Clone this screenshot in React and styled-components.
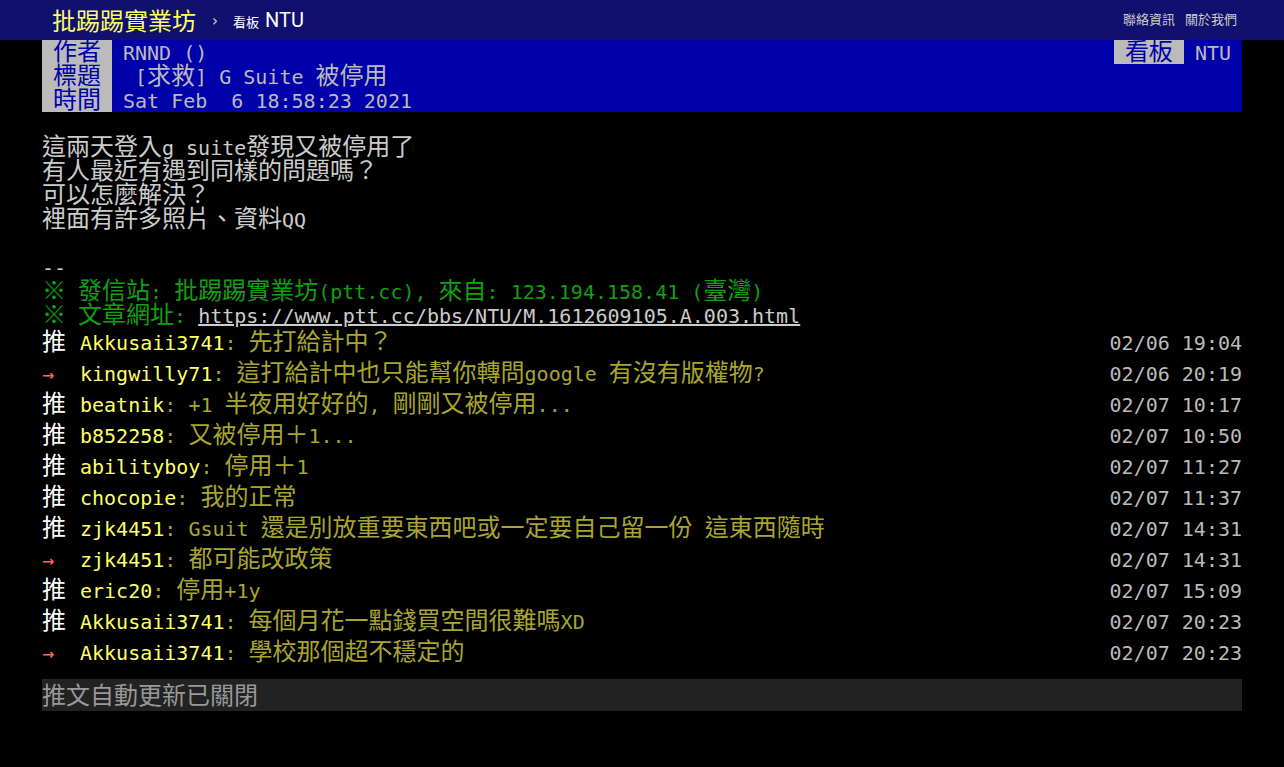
import React from 'react';
import styled, { createGlobalStyle } from 'styled-components';

const GlobalStyle = createGlobalStyle`
  html, body {
    margin: 0;
    background: #000;
  }
  body {
    font-family: "DejaVu Sans Mono", "Noto Sans CJK TC", monospace;
    font-size: 20px;
    color: #ccc;
  }
`;

const Topbar = styled.div`
  height: 40px;
  background: #10106e;
`;

const TopbarInner = styled.div`
  width: 1200px;
  height: 100%;
  margin: 0 auto;
  padding: 0 5px 0 10px;
  box-sizing: border-box;
  display: flex;
  align-items: center;
`;

const SiteTitle = styled.a`
  font-family: "Noto Sans CJK TC", sans-serif;
  font-size: 24px;
  line-height: 40px;
  color: #ff6;
  text-decoration: none;
`;

const Sep = styled.span`
  font-family: "DejaVu Sans", sans-serif;
  font-size: 15px;
  color: #ddd;
  margin: 2px 15px 0 16px;
`;

const BoardLabel = styled.span`
  font-family: "Noto Sans CJK TC", sans-serif;
  font-size: 13px;
  color: #fff;
  margin: 3px 6px 0 0;
`;

const BoardName = styled.a`
  font-family: Roboto, "Noto Sans", sans-serif;
  font-size: 20px;
  color: #fff;
  text-decoration: none;
`;

const TopLinks = styled.nav`
  margin: 0 0 4px auto;
  display: flex;
  gap: 10px;
`;

const TopLink = styled.a`
  font-family: "Noto Sans CJK TC", sans-serif;
  font-size: 13px;
  color: #ccc;
  text-decoration: none;
`;

const Main = styled.div`
  width: 1200px;
  margin: 0 auto;
`;

// full-width glyphs: double the cell of the mono font
const Wide = styled.span`
  font-family: "Noto Sans CJK TC", sans-serif;
  font-size: 1.2em;
  line-height: 0;
`;

const Header = styled.div`
  background: #00a;
  color: #bbb;
`;

const MetaRow = styled.div`
  display: flex;
  height: 24px;
  line-height: 26px;
  white-space: pre;
`;

const MetaTag = styled.span`
  background: #bbb;
  color: #00a;
  padding: 0 11px;
  height: 24px;
`;

const MetaValue = styled.span`
  padding: 0 11px;
  flex: ${(p) => (p.$grow ? 1 : 'none')};
`;

const Body = styled.div`
  margin-top: 24px;
`;

const Line = styled.div`
  height: 24px;
  line-height: 24px;
  white-space: pre;
  color: ${(p) => p.$color || '#ccc'};
`;

const Link = styled.a`
  color: #ccc;
  text-decoration: underline;
`;

const PushRow = styled.div`
  display: flex;
  align-items: baseline;
  height: 31px;
  line-height: 31px;
  white-space: pre;
`;

const PushTag = styled.span`
  width: 38px;
  flex: none;
  color: ${(p) => (p.$arrow ? '#f66' : '#fff')};
`;

const PushUser = styled.span`
  color: #ff6;
`;

const PushContent = styled.span`
  color: #a9a530;
  flex: 1;
`;

const PushDate = styled.span`
  color: #bbb;
`;

const Polling = styled.div`
  margin-top: 10px;
  height: 32px;
  line-height: 36px;
  background: #222;
  color: #999;
`;

const WIDE_RE = /([\u203b\u2e80-\u9fff\uf900-\ufaff\ufe30-\ufe4f\uff00-\uff60\uffe0-\uffe6]+)/;

const Txt = ({ text }) =>
  text.split(WIDE_RE).map((s, i) => (i % 2 ? <Wide key={i}>{s}</Wide> : s));

const pushes = [
  ['推', 'Akkusaii3741', ': 先打給計中？', '02/06 19:04'],
  ['→', 'kingwilly71', ': 這打給計中也只能幫你轉問google 有沒有版權物?', '02/06 20:19'],
  ['推', 'beatnik', ': +1 半夜用好好的, 剛剛又被停用...', '02/07 10:17'],
  ['推', 'b852258', ': 又被停用＋1...', '02/07 10:50'],
  ['推', 'abilityboy', ': 停用＋1', '02/07 11:27'],
  ['推', 'chocopie', ': 我的正常', '02/07 11:37'],
  ['推', 'zjk4451', ': Gsuit 還是別放重要東西吧或一定要自己留一份 這東西隨時', '02/07 14:31'],
  ['→', 'zjk4451', ': 都可能改政策', '02/07 14:31'],
  ['推', 'eric20', ': 停用+1y', '02/07 15:09'],
  ['推', 'Akkusaii3741', ': 每個月花一點錢買空間很難嗎XD', '02/07 20:23'],
  ['→', 'Akkusaii3741', ': 學校那個超不穩定的', '02/07 20:23'],
];

const bodyLines = [
  '這兩天登入g suite發現又被停用了',
  '有人最近有遇到同樣的問題嗎？',
  '可以怎麼解決？',
  '裡面有許多照片、資料QQ',
  '',
  '--',
];

export default function App() {
  return (
    <>
      <GlobalStyle />
      <Topbar>
        <TopbarInner>
          <SiteTitle href="#">批踢踢實業坊</SiteTitle>
          <Sep>›</Sep>
          <BoardLabel>看板</BoardLabel>
          <BoardName href="#">NTU</BoardName>
          <TopLinks>
            <TopLink href="#">聯絡資訊</TopLink>
            <TopLink href="#">關於我們</TopLink>
          </TopLinks>
        </TopbarInner>
      </Topbar>
      <Main>
        <Header>
          <MetaRow>
            <MetaTag><Txt text="作者" /></MetaTag>
            <MetaValue $grow>RNND ()</MetaValue>
            <MetaTag><Txt text="看板" /></MetaTag>
            <MetaValue>NTU</MetaValue>
          </MetaRow>
          <MetaRow>
            <MetaTag><Txt text="標題" /></MetaTag>
            <MetaValue $grow><Txt text=" [求救] G Suite 被停用" /></MetaValue>
          </MetaRow>
          <MetaRow>
            <MetaTag><Txt text="時間" /></MetaTag>
            <MetaValue $grow>Sat Feb  6 18:58:23 2021</MetaValue>
          </MetaRow>
        </Header>
        <Body>
          {bodyLines.map((l, i) => (
            <Line key={i}><Txt text={l} /></Line>
          ))}
          <Line $color="#11a011">
            <Txt text="※ 發信站: 批踢踢實業坊(ptt.cc), 來自: 123.194.158.41 (臺灣)" />
          </Line>
          <Line $color="#11a011">
            <Txt text="※ 文章網址: " />
            <Link href="#">https://www.ptt.cc/bbs/NTU/M.1612609105.A.003.html</Link>
          </Line>
          {pushes.map(([tag, user, content, date], i) => (
            <PushRow key={i}>
              <PushTag $arrow={tag === '→'}><Txt text={tag} /></PushTag>
              <PushUser>{user}</PushUser>
              <PushContent><Txt text={content} /></PushContent>
              <PushDate>{date}</PushDate>
            </PushRow>
          ))}
        </Body>
        <Polling><Txt text="推文自動更新已關閉" /></Polling>
      </Main>
    </>
  );
}
